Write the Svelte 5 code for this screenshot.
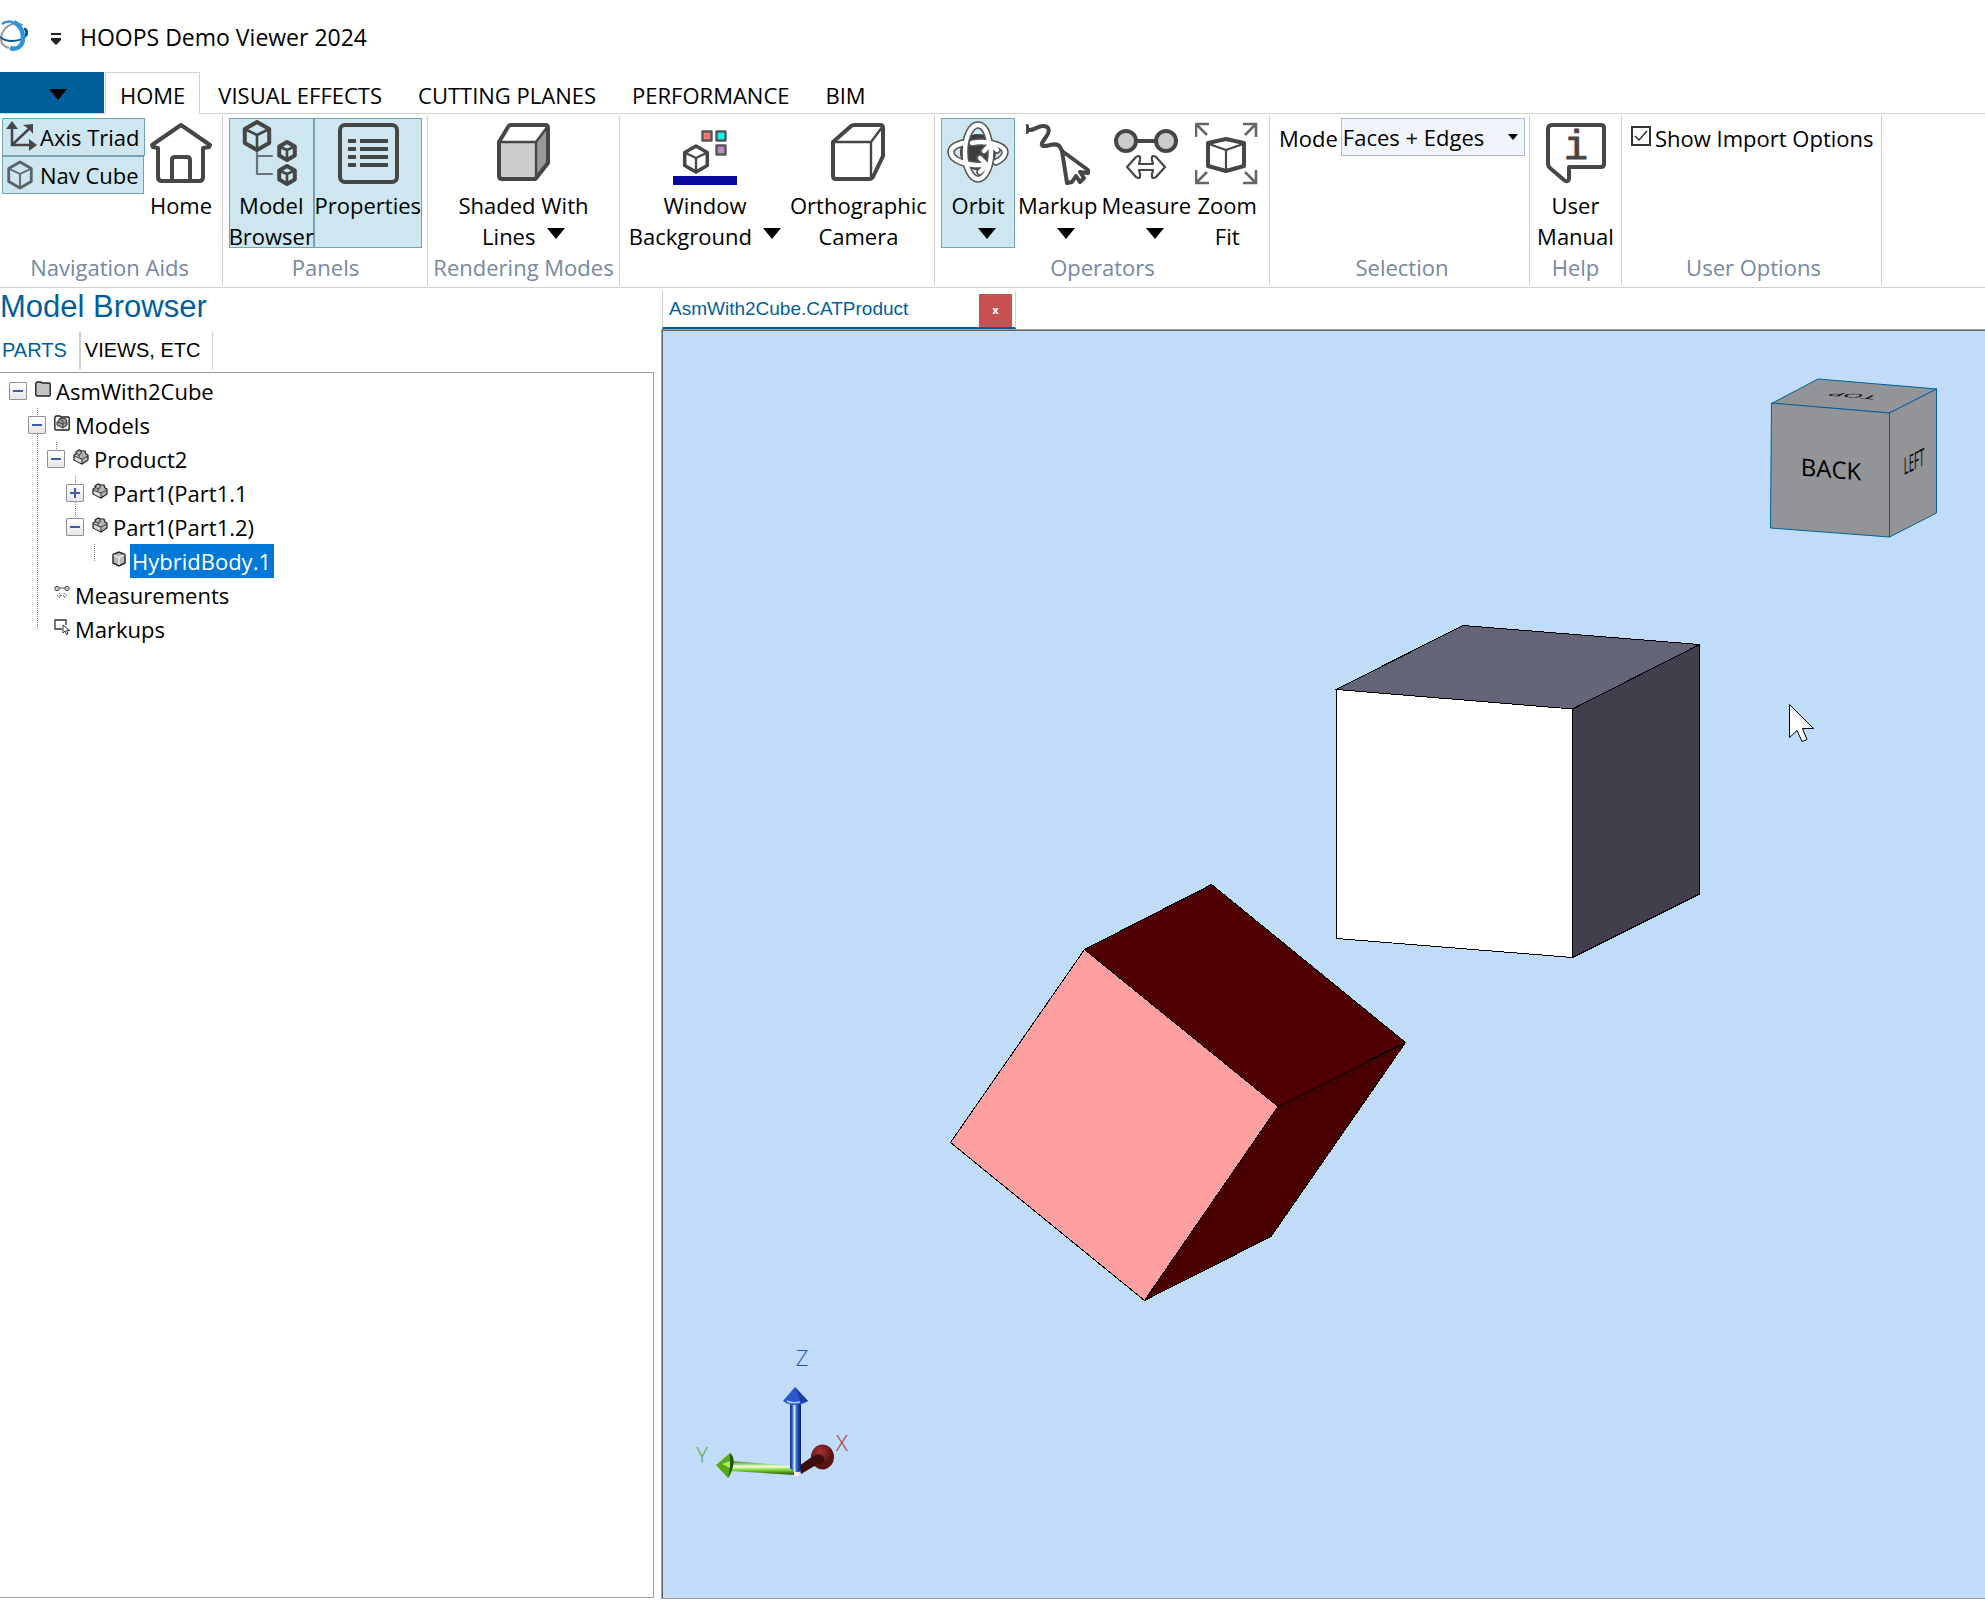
<script>
  const tabs = ['HOME', 'VISUAL EFFECTS', 'CUTTING PLANES', 'PERFORMANCE', 'BIM'];
  let activeTab = $state('HOME');
  let mode = $state('Faces + Edges');
  let importOptions = $state(true);
  let selected = $state('HybridBody.1');

  const tree = [
    {
      label: 'AsmWith2Cube', icon: 'folder', open: true, children: [
        {
          label: 'Models', icon: 'models', open: true, children: [
            {
              label: 'Product2', icon: 'part', open: true, children: [
                { label: 'Part1(Part1.1', icon: 'part', open: false, children: [] },
                {
                  label: 'Part1(Part1.2)', icon: 'part', open: true, children: [
                    { label: 'HybridBody.1', icon: 'body' }
                  ]
                }
              ]
            }
          ]
        },
        { label: 'Measurements', icon: 'measure' },
        { label: 'Markups', icon: 'markup' }
      ]
    }
  ];

  // Isometric cube: hexagon outline plus the three inner edges.
  function cube(cx, cy, r) {
    const w = Math.round(r * 8.7) / 10;
    const h = r / 2;
    return `M${cx} ${cy - r}L${cx + w} ${cy - h}V${cy + h}L${cx} ${cy + r}L${cx - w} ${cy + h}V${cy - h}Z`;
  }
  function cubeEdges(cx, cy, r) {
    const w = Math.round(r * 8.7) / 10;
    const h = r / 2;
    return `M${cx - w} ${cy - h}L${cx} ${cy - 1}L${cx + w} ${cy - h}M${cx} ${cy - 1}V${cy + r}`;
  }
</script>

{#snippet hex(cx, cy, r, sw, fill)}
  <path d={cube(cx, cy, r)} {fill} stroke-width={sw} />
  <path d={cubeEdges(cx, cy, r)} stroke-width={sw * 0.65} />
{/snippet}

{#snippet icon(name)}
  <svg class="icon" viewBox="0 0 64 66" aria-hidden="true">
    {#if name === 'home'}
      <path d="M32 5 61 25 60 27 54 28V57Q54 61 50 61H13Q9 61 9 57V28L4 27 3 25Z" fill="#fff" />
      <path d="M23 61V40Q23 37 26 37H38Q41 37 41 40V61" />
    {:else if name === 'browser'}
      {@render hex(18, 16, 14, 4, 'none')}
      {@render hex(48, 31, 9, 4, 'none')}
      {@render hex(48, 55, 9, 4, 'none')}
      <path d="M18 33V54H33M18 36H33" stroke="#6a7377" stroke-width="2.2" />
    {:else if name === 'properties'}
      <rect x="4" y="5" width="57" height="57" rx="5" />
      {#each [21, 29, 37, 45] as y}
        <path d="M12 {y}H20M24 {y}H52" stroke-linecap="butt" />
      {/each}
    {:else if name === 'shaded'}
      <path d="M8 22H45V59H11Q8 59 8 56Z" fill="#ccc" stroke="none" />
      <path d="M45 22 57 6V43L45 59Z" fill="#999" stroke="none" />
      <path d="M8 22 17 7Q18 5 20 5H54Q57 5 57 8V43L46 57Q45 59 43 59H11Q8 59 8 56Z" />
      <path d="M8 22H45V59M45 22 57 6" stroke-width="2.4" />
    {:else if name === 'background'}
      <rect x="0" y="56" width="64" height="9" fill="#0a0a9c" stroke="none" />
      {@render hex(23, 39, 13, 3.6, '#fff')}
      <g stroke="#565656" stroke-width="2.4">
        <rect x="29.5" y="11.5" width="9" height="9" fill="#ff7878" />
        <rect x="43.5" y="11.5" width="9" height="9" fill="#0ff" />
        <rect x="43.5" y="25.5" width="9" height="9" fill="#c08cc8" />
      </g>
    {:else if name === 'camera'}
      <path d="M7 22 24 7Q26 5 28 5H54Q57 5 57 8V36L47 57Q46 59 43 59H10Q7 59 7 56Z" />
      <path d="M7 22H45V59M45 22 57 6" stroke-width="2.4" />
    {:else if name === 'orbit'}
      <circle cx="32" cy="32" r="18" fill="#3e3e3e" stroke="none" />
      <g stroke="#555" stroke-width="7.5">
        <path d="M43 21C41 11 37 5 32 5C25 5 19 17 19 32S25 59 32 59S45 47 45 32V28" />
        <path d="M26 23C40 20 59 25 59 32C59 36 55 40 50 42M17 23C9 25 5 28 5 32C5 40 20 46 38 45" />
        <path d="M38 31 45 24 51 30M34 38 41 45 34 52" />
      </g>
      <g stroke="#fff" stroke-width="4.4">
        <path d="M43 21C41 11 37 5 32 5C25 5 19 17 19 32S25 59 32 59S45 47 45 32V28" />
        <path d="M26 23C40 20 59 25 59 32C59 36 55 40 50 42M17 23C9 25 5 28 5 32C5 40 20 46 38 45" />
        <path d="M38 31 45 24 51 30M34 38 41 45 34 52" />
      </g>
    {:else if name === 'markup'}
      <path d="M2 10C8 11 11 6 17 6C24 6 24 12 20 17C17 21 14 25 17 26C22 27 30 21 34 27L36 31" />
      <path d="M1 6V12" />
      <path d="M36 31 62 50V53L54 52 58 58 54 62 50 56 46 62 41 63Z" fill="#fff" />
    {:else if name === 'measure'}
      <path d="M22 21H42" />
      <circle cx="12" cy="21" r="10" fill="#ccc" />
      <circle cx="52" cy="21" r="10" fill="#ccc" />
      <path d="M13 47 22 37Q27 34 26 40L25 44H39L38 40Q37 34 42 37L51 47 42 57Q37 60 38 54L39 50H25L26 54Q27 60 22 57Z" stroke-width="2.2" />
    {:else if name === 'zoom'}
      <g stroke="#666" stroke-width="2.6" stroke-linejoin="miter" stroke-linecap="butt">
        <path d="M14 4H1V17M1 4 12 15M48 4H61V17M61 4 50 15M14 63H1V50M1 63 12 52M48 63H61V50M61 63 50 52" />
      </g>
      <path d="M31 19 49 23V46L31 51 13 46V23Z" />
      <path d="M14 24 31 30 48 24M31 30V50" stroke-width="2.2" />
    {:else if name === 'manual'}
      <path d="M8 5H57Q60 5 60 8V44Q60 47 57 47H25V59Q24 63 20 60L6 48Q4 46 4 44V9Q4 5 8 5Z" />
      <text x="32" y="39" class="info">i</text>
    {/if}
  </svg>
{/snippet}

{#snippet arrow()}
  <svg class="arrow" viewBox="0 0 18 11" aria-hidden="true"><path d="M0 0H18L9 11Z" fill="#000" /></svg>
{/snippet}

{#snippet nodeIcon(name)}
  <svg class="node-icon" viewBox="0 0 16 16" aria-hidden="true">
    {#if name === 'folder'}
      <path d="M.8 2.5 2 1H6L7 2H14.5L15.2 3V14L14.5 15H1.8L.8 14Z" fill="#c3c3c3" stroke="#222" stroke-width="1.4" />
    {:else if name === 'models'}
      <path d="M.8 2.5 2 1H6L7 2H14.5L15.2 3V14L14.5 15H1.8L.8 14Z" fill="#f0f0f0" stroke="#222" stroke-width="1.4" />
      <path d="M3 7 5 6V4L8 3 12 4 13 7V10L9 13 3 10Z" fill="#999" stroke="#333" />
      <path d="M3 7 9 9 13 7M9 9V13M6 4 9 6V8" stroke="#333" stroke-width=".8" fill="none" />
    {:else if name === 'part'}
      <path d="M1 6 3 5V3L6 1 9 2 12 2 13 5 15 6V11L9 15 1 11Z" fill="#b4b4b4" stroke="#222" stroke-width="1.2" />
      <path d="M1 7 9 10 15 7M9 10V15M3 4 6 6 8 5V2M6 6V8" stroke="#222" stroke-width=".8" fill="none" />
      <path d="M2 8 8 11V14L2 11Z" fill="#ddd" />
    {:else if name === 'body'}
      <path d="M2 3.5 8 1 14 3.5V12L8 15 2 12Z" fill="#bbb" stroke="#222" stroke-width="1.4" />
      <path d="M2.5 4 8 6.5 13.5 4M8 6.5V14" stroke="#fff" fill="none" />
    {:else if name === 'measure'}
      <path d="M5 3H11" stroke="#444" />
      <circle cx="3" cy="3.5" r="2.2" fill="#ccc" stroke="#444" />
      <circle cx="13" cy="3.5" r="2.2" fill="#ccc" stroke="#444" />
      <path d="M3 10.500 6 8V13ZM13 10.500 10 8V13ZM6 10.500H10" stroke="#777" fill="none" stroke-dasharray="2 1" />
    {:else}
      <path d="M8 10H1V1H12V6" stroke="#333" fill="none" stroke-width="1.3" />
      <path d="M9 6V14L11 12 12.500 15.500 14 15 12.500 11.500H15.500Z" stroke="#333" fill="#fff" />
    {/if}
  </svg>
{/snippet}

{#snippet branch(nodes)}
  <ul>
    {#each nodes as node}
      <li>
        <div class="node">
          {#if node.children}
            <button class="toggle" aria-label="{node.open ? 'Collapse' : 'Expand'} {node.label}">
              <svg viewBox="0 0 16 16" aria-hidden="true">
                <path d={node.open ? 'M3 8H13' : 'M3 8H13M8 3V13'} stroke="#3f5ba9" stroke-width="2" />
              </svg>
            </button>
          {:else}
            <span class="leaf"></span>
          {/if}
          {@render nodeIcon(node.icon)}
          <button
            class="label"
            class:selected={selected === node.label}
            onclick={() => (selected = node.label)}>{node.label}</button>
        </div>
        {#if node.open}
          {@render branch(node.children)}
        {/if}
      </li>
    {/each}
  </ul>
{/snippet}

<div class="app">
  <header class="titlebar">
    <svg class="logo" viewBox="0 0 28 32" fill="none" aria-hidden="true">
      <path d="M1 18C2 8 12 0 23 5" stroke="#999" stroke-width="2" />
      <path d="M1 19C1 24 5 27 9 28" stroke="#999" stroke-width="2" />
      <path d="M24 8C30 12 25 21 12 21C6 21 2 19 0 17" stroke="#0a5a96" stroke-width="2" />
      <path d="M25 9C28 12 27 15 24 17" stroke="#0a5a96" stroke-width="3" />
      <path d="M2 4C7 0 13 1 17 5" stroke="#2a94dc" stroke-width="2.500" />
      <path d="M14 2C25 8 25 23 19 27C16 29 13 29 10 28" stroke="#2a94dc" stroke-width="4.500" />
    </svg>
    <button class="quick" aria-label="Customize quick access toolbar">
      <svg viewBox="0 0 12 14" aria-hidden="true"><path d="M1 1H11V3H1ZM1 6H11V8L6 13 1 8Z" fill="#222" /></svg>
    </button>
    <h1>HOOPS Demo Viewer 2024</h1>
  </header>

  <nav class="tabs">
    <button class="file" aria-label="File menu">{@render arrow()}</button>
    {#each tabs as tab}
      <button class="tab" class:active={activeTab === tab} onclick={() => (activeTab = tab)}>{tab}</button>
    {/each}
  </nav>

  <section class="ribbon">
    <div class="group aids">
      <div class="tools">
        <div class="stack">
          <button class="small on">
            <svg viewBox="0 0 32 32" aria-hidden="true">
              <g stroke="#464646" stroke-width="2.500" fill="none"><path d="M7 7V24H25M8 23 25 7" /></g>
              <path d="M7 0 13 8H1ZM32 24 24 30V18ZM28 3V13L24 8 18 4Z" fill="#464646" />
            </svg>Axis Triad</button>
          <button class="small on">
            <svg viewBox="0 0 32 32" fill="none" stroke="#5c6367" stroke-linejoin="round" aria-hidden="true">
              {@render hex(15, 16, 13, 2.8, 'none')}
            </svg>Nav Cube</button>
        </div>
        <button class="big">{@render icon('home')}<span>Home</span></button>
      </div>
      <div class="caption">Navigation Aids</div>
    </div>

    <div class="group panels">
      <div class="tools">
        <button class="big on">{@render icon('browser')}<span>Model<br />Browser</span></button>
        <button class="big on wide">{@render icon('properties')}<span>Properties</span></button>
      </div>
      <div class="caption">Panels</div>
    </div>

    <div class="group modes">
      <div class="tools">
        <button class="big">{@render icon('shaded')}<span>Shaded With<br />Lines&nbsp; {@render arrow()}</span></button>
      </div>
      <div class="caption">Rendering Modes</div>
    </div>

    <div class="group window">
      <div class="tools">
        <button class="big">{@render icon('background')}<span>Window<br />Background&nbsp; {@render arrow()}</span></button>
        <button class="big">{@render icon('camera')}<span>Orthographic<br />Camera</span></button>
      </div>
    </div>

    <div class="group operators">
      <div class="tools">
        <button class="big on orbit">{@render icon('orbit')}<span>Orbit<br />&nbsp;&nbsp; {@render arrow()}</span></button>
        <button class="big">{@render icon('markup')}<span>Markup<br />&nbsp;&nbsp; {@render arrow()}</span></button>
        <button class="big">{@render icon('measure')}<span>Measure<br />&nbsp;&nbsp; {@render arrow()}</span></button>
        <button class="big">{@render icon('zoom')}<span>Zoom<br />Fit</span></button>
      </div>
      <div class="caption">Operators</div>
    </div>

    <div class="group selection">
      <div class="tools">
        <label for="mode">Mode</label>
        <div class="combo">
          <select id="mode" bind:value={mode}>
            <option>Faces + Edges</option>
            <option>Faces</option>
            <option>Edges</option>
          </select>
          <svg viewBox="0 0 10 7" aria-hidden="true"><path d="M0 0H10L5 6Z" fill="#000" /></svg>
        </div>
      </div>
      <div class="caption">Selection</div>
    </div>

    <div class="group help">
      <div class="tools">
        <button class="big">{@render icon('manual')}<span>User<br />Manual</span></button>
      </div>
      <div class="caption">Help</div>
    </div>

    <div class="group options">
      <div class="tools">
        <label class="check">
          <span class="box">
            <input type="checkbox" bind:checked={importOptions} />
            {#if importOptions}
              <svg viewBox="0 0 20 20" aria-hidden="true"><path d="M4 10 8 14 16 5" fill="none" stroke="#333" stroke-width="1.500" /></svg>
            {/if}
          </span>Show Import Options</label>
      </div>
      <div class="caption">User Options</div>
    </div>
  </section>

  <main>
    <aside>
      <h2>Model Browser</h2>
      <div class="side-tabs">
        <button class="current">PARTS</button>
        <button>VIEWS, ETC</button>
      </div>
      <div class="tree">{@render branch(tree)}</div>
    </aside>

    <section class="document">
      <div class="doc-tab">
        <span>AsmWith2Cube.CATProduct</span>
        <button aria-label="Close document">x</button>
      </div>
      <div class="canvas">
        <svg class="scene" viewBox="663 331 1322 1267" aria-label="Model view">
          <g stroke="#000" shape-rendering="crispEdges" stroke-linejoin="round">
            <path d="M1336 689.500 1463 625.500 1699.500 644.500 1572.500 709Z" fill="#646478" />
            <path d="M1572.500 709 1699.500 644.500V894L1572.500 957.500Z" fill="#403f4b" />
            <path d="M1336.500 689.500 1572.500 709V957.500L1336.500 938.500Z" fill="#fff" />
            <path d="M1084.500 949.500 1211.500 884.500 1405.500 1042.500 1278 1106.500Z" fill="#500000" />
            <path d="M1278 1106.500 1405.500 1042.500 1271 1236.500 1144.500 1300.500Z" fill="#4a0000" />
            <path d="M1084.500 949.500 1278 1106.500 1144.500 1300.500 950.500 1142.500Z" fill="#ffa0a0" />
          </g>
          <path d="M1789.500 704.500V737.500L1797 730.500 1802 741.500 1807 739.500 1802.500 728.500H1813.500Z" fill="#fff" stroke="#000" />
        </svg>

        <svg class="nav-cube" viewBox="0 0 170 162" aria-label="Navigation cube">
          <g fill="#929497" stroke="#005f9b" stroke-linejoin="round">
            <path d="M2.500 25.500 49 1 168 11 120.500 35Z" />
            <path d="M120.500 35 167.500 11V135L120.500 159Z" />
            <path d="M2.500 25 120.500 35V159L1.500 150Z" />
          </g>
          <text class="face" transform="matrix(1 .085 0 1 62 100)">BACK</text>
          <text class="face" transform="matrix(.4 -.2 0 1 145 92)">LEFT</text>
          <text class="face" transform="matrix(-1 -.085 .39 -.2 87 16)">TOP</text>
        </svg>

        <svg class="triad" viewBox="0 0 200 170" aria-label="Axis triad">
          <defs>
            <linearGradient id="zShaft"><stop offset="0" stop-color="#0c2a80" /><stop offset=".2" stop-color="#2f62d8" /><stop offset=".4" stop-color="#d4f4ff" /><stop offset=".6" stop-color="#3566dc" /><stop offset="1" stop-color="#0a1c50" /></linearGradient>
            <linearGradient id="yShaft" x2="0" y2="1"><stop offset="0" stop-color="#3d8a14" /><stop offset=".4" stop-color="#f4ffdc" /><stop offset=".65" stop-color="#79d62c" /><stop offset="1" stop-color="#1c4a08" /></linearGradient>
            <radialGradient id="xHead" cx=".4" cy=".3"><stop offset="0" stop-color="#a83434" /><stop offset="1" stop-color="#5a1414" /></radialGradient>
          </defs>
          <ellipse cx="142.500" cy="127" rx="11.500" ry="12.500" fill="url(#xHead)" />
          <path d="M119 136 133 126Q142 122 144 128T138 134L121 144Z" fill="#3c0d0d" />
          <path d="M51 131 115 136V145L51 141Z" fill="url(#yShaft)" />
          <path d="M36 135 50 123Q55 127 53 136T48 148Z" fill="#58a81e" />
          <path d="M50 123Q56 128 52 140L48 148Q51 136 50 123Z" fill="#22500c" />
          <path d="M42 134 50 131V138Z" fill="#a6ec5c" />
          <path d="M110 73H121V140L118 143 114 142 110 138Z" fill="url(#zShaft)" />
          <path d="M115 57 128 71Q122 75 115 75T103 71Z" fill="#2a58cc" />
          <path d="M107 71Q112 74 120 72" stroke="#a8d4ff" stroke-width="1.500" fill="none" />
          <path d="M115 57 121 73 128 71Z" fill="#1b3f9e" />
          <rect x="114" y="142" width="5" height="4" fill="#ffe8e0" />
          <text x="122" y="36" fill="#2850c0">Z</text>
          <text x="22" y="133" fill="#5aa832">Y</text>
          <text x="162" y="121" fill="#b03030">X</text>
        </svg>
      </div>
    </section>
  </main>
</div>

<style>
  :global(body) {
    margin: 0;
    background: #fff;
  }
  .app {
    min-height: 100vh;
    display: flex;
    flex-direction: column;
    box-sizing: border-box;
    padding-bottom: 2px;
    font: 22px/31px 'Open Sans', 'Noto Sans', sans-serif;
    color: #000;
    overflow: hidden;
  }
  button, select, input {
    font: inherit;
    color: inherit;
    margin: 0;
    padding: 0;
    border: 0;
    background: none;
    border-radius: 0;
  }
  button { white-space: nowrap; }
  svg { display: block; flex: none; }

  .titlebar {
    display: flex;
    align-items: center;
    height: 72px;
  }
  .logo { width: 28px; height: 32px; }
  .quick { margin: 6px 18px 0 22px; }
  .quick svg { width: 12px; height: 14px; }
  h1 {
    margin: 2px 0 0;
    font-size: 23px;
    font-weight: 400;
  }

  .tabs {
    display: flex;
    height: 41px;
    border-bottom: 1px solid #d0d0d0;
  }
  .file {
    display: grid;
    place-items: center;
    width: 104px;
    margin-right: 1px;
    padding: 3px 0 0 12px;
    background: #005f9b;
  }
  .tab { padding: 5px 18px 0; }
  .tab.active {
    padding: 4px 14px 0;
    border: 1px solid #d0d0d0;
    border-bottom: 0;
    background: #fff;
    margin-bottom: -1px;
  }

  .ribbon {
    display: flex;
    padding: 2px 0;
    border-bottom: 1px solid #d0d0d0;
  }
  .group {
    display: flex;
    flex-direction: column;
    box-sizing: border-box;
    height: 169px;
    padding: 2px 5px 2px 6px;
    border-right: 1px solid #d0d0d0;
  }
  .tools { display: flex; height: 134px; align-items: flex-start; }
  .caption { text-align: center; color: #7688a2; white-space: nowrap; }
  .aids { padding-left: 2px; width: 223px; }
  .panels { width: 205px; }
  .modes { width: 192px; align-items: center; padding: 2px; }
  .window { width: 315px; }
  .window .tools { gap: 5px; }
  .window .big:first-child { min-width: 158px; }
  .operators { width: 335px; }
  .operators .tools { gap: 2px; }
  .selection { width: 260px; }
  .help { width: 92px; padding: 2px; }
  .options { width: 260px; padding-left: 9px; }

  .stack { display: flex; flex-direction: column; align-items: flex-start; width: 146px; }
  .small {
    display: flex;
    align-items: center;
    box-sizing: border-box;
    height: 38px;
    padding: 0 4px 0 2px;
    gap: 3px;
    border: 1px solid transparent;
  }
  .small svg { width: 32px; height: 32px; }
  .big {
    display: flex;
    flex-direction: column;
    align-items: center;
    box-sizing: border-box;
    height: 130px;
    padding: 1px 0 0;
    gap: 4px;
    border: 1px solid transparent;
  }
  .panels .big { flex: 1 1 85px; min-width: 0; }
  .panels .wide { flex: 1 1 109px; }
  .orbit { width: 74px; }
  .help .big { width: 100%; }
  .on { background: #cde6ef; border-color: #74a4b4; }
  .icon {
    width: 64px;
    height: 66px;
    fill: none;
    stroke: #464646;
    stroke-width: 4;
    stroke-linejoin: round;
    stroke-linecap: round;
  }
  .icon + span { height: 58px; }
  .info {
    font: 40px 'Liberation Mono', monospace;
    fill: #464646;
    stroke-width: 1px;
    text-anchor: middle;
  }
  .arrow { display: inline-block; width: 18px; height: 11px; vertical-align: 6px; }

  .combo {
    display: grid;
    flex: 1;
    margin-left: 3px;
    align-items: center;
    box-sizing: border-box;
    height: 38px;
    border: 1px solid #a9b9d6;
    background: #f1f5fb;
  }
  .combo select, .combo svg { grid-area: 1 / 1; }
  .combo select {
    appearance: none;
    width: 100%;
    height: 36px;
    padding: 0 24px 0 1px;
  }
  .combo svg { width: 10px; height: 7px; justify-self: end; margin-right: 6px; pointer-events: none; }
  .selection { padding-left: 9px; padding-right: 4px; }
  .selection label { line-height: 40px; }

  .check { display: flex; align-items: center; gap: 4px; line-height: 40px; white-space: nowrap; }
  .box { display: grid; margin-bottom: 4px; }
  .box input, .box svg { grid-area: 1 / 1; width: 20px; height: 20px; }
  .box input { appearance: none; box-sizing: border-box; border: 2px solid #333; background: #fff; }
  .box svg { pointer-events: none; z-index: 1; }

  main { flex: 1; display: flex; gap: 7px; }
  aside { flex: 0 0 654px; display: flex; flex-direction: column; min-width: 0; }
  h2 {
    margin: 0;
    font: 31px/38px 'Liberation Sans', Arial, sans-serif;
    color: #005f9b;
  }
  .side-tabs { display: flex; margin-top: 6px; height: 38px; font: 20px/36px 'Liberation Sans', Arial, sans-serif; }
  .side-tabs button { padding: 0 12px 2px 4px; border-right: 1px solid #d0d0d0; }
  .side-tabs .current { padding: 0 12px 2px 2px; border-right-width: 2px; color: #005f9b; }
  .tree {
    flex: 1;
    margin-top: 2px;
    padding: 1px 0 0 18px;
    border: 1px solid #a0a0a0;
    border-left: 0;
  }
  ul { list-style: none; margin: 0; padding: 0; }
  li ul { margin-left: 19px; }
  li li { background: repeating-linear-gradient(#888 0 1px, transparent 1px 2px) 0 0 / 1px 100% no-repeat; }
  li li:last-child { background-size: 1px 17px; }
  .node { display: flex; align-items: center; height: 34px; }
  .toggle {
    box-sizing: border-box;
    width: 18px;
    height: 18px;
    margin: 0 8px 0 -9px;
    border: 1px solid #919191;
    border-radius: 1px;
    background: linear-gradient(#fff, #e6e6e6);
  }
  .leaf { width: 17px; }
  .node-icon { width: 16px; height: 16px; margin: 0 3px 4px 0; }
  .label { padding: 0 3px 0 2px; line-height: 34px; }
  .selected { background: #0078d7; color: #fff; }

  .document { flex: 1; display: flex; flex-direction: column; min-width: 0; padding-top: 3px; }
  .doc-tab {
    display: flex;
    align-self: flex-start;
    align-items: center;
    box-sizing: border-box;
    width: 354px;
    height: 38px;
    margin-left: 1px;
    padding: 0 3px 0 6px;
    border: 1px solid #d0d0d0;
    border-width: 0 1px;
    border-bottom: 2px solid #005f9b;
    color: #005f9b;
    font: 19px/36px 'Liberation Sans', Arial, sans-serif;
  }
  .doc-tab span { flex: 1; }
  .doc-tab button {
    align-self: flex-end;
    width: 33px;
    height: 33px;
    background: #c75050;
    color: #fff;
    font: bold 10px/33px 'DejaVu Sans', sans-serif;
  }
  .canvas {
    flex: 1;
    position: relative;
    background: #c0dcf8;
    border: 1px solid #646464;
    border-width: 1px 0 0 1px;
    outline: 1px solid #a0a0a0;
    overflow: hidden;
    margin-left: 1px;
    margin-top: 1px;
  }
  .scene { position: absolute; inset: 0; width: 100%; height: 100%; }
  .nav-cube { position: absolute; top: 47px; right: 46px; width: 170px; height: 162px; }
  .face { font-size: 24px; text-anchor: middle; fill: #000; }
  .triad { position: absolute; left: 17px; bottom: 98px; width: 200px; height: 170px; }
  .triad text { font-size: 22px; font-weight: 300; text-anchor: middle; }
</style>
